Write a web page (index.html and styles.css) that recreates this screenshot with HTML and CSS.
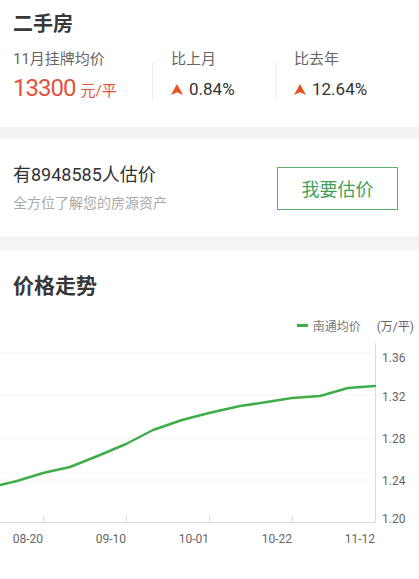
FILE: index.html
```html
<!DOCTYPE html>
<html lang="zh-CN">
<head>
  <meta charset="UTF-8" />
  <title>二手房 - 价格走势</title>
  <link rel="stylesheet" href="styles.css">
</head>
<body>
  <!-- 挂牌均价 -->
  <section class="summary">
    <h1 class="title">二手房</h1>
    <div class="stats">
      <div class="stat stat-main">
        <p class="stat-label">11月挂牌均价</p>
        <p class="stat-value price">13300<span class="unit">元/平</span></p>
      </div>
      <div class="divider"></div>
      <div class="stat stat-mid">
        <p class="stat-label">比上月</p>
        <p class="stat-value"><svg class="up" viewBox="0 0 12 11"><path d="M6 0 L12 11 L6 8.2 L0 11 Z"/></svg>0.84%</p>
      </div>
      <div class="divider"></div>
      <div class="stat">
        <p class="stat-label">比去年</p>
        <p class="stat-value"><svg class="up" viewBox="0 0 12 11"><path d="M6 0 L12 11 L6 8.2 L0 11 Z"/></svg>12.64%</p>
      </div>
    </div>
  </section>

  <div class="band"></div>

  <!-- 估价 -->
  <section class="estimate">
    <div class="estimate-text">
      <p class="estimate-count">有8948585人估价</p>
      <p class="estimate-sub">全方位了解您的房源资产</p>
    </div>
    <button class="estimate-btn">我要估价</button>
  </section>

  <div class="band band-2"></div>

  <!-- 价格走势 -->
  <section class="trend">
    <h1 class="title trend-title">价格走势</h1>
    <div class="legend">
      <span class="legend-line"></span>
      <span class="legend-name">南通均价</span>
      <span class="legend-unit">(万/平)</span>
    </div>
    <svg class="chart" width="419" height="246" viewBox="0 0 419 246">
      <g class="grid">
        <line x1="0" y1="20" x2="375" y2="20"/>
        <line x1="0" y1="62" x2="375" y2="62"/>
        <line x1="0" y1="105" x2="375" y2="105"/>
        <line x1="0" y1="147" x2="375" y2="147"/>
      </g>
      <g class="axis">
        <line x1="375.5" y1="10" x2="375.5" y2="189.5"/>
        <line x1="0" y1="189.5" x2="375.5" y2="189.5"/>
        <line x1="43.5" y1="183" x2="43.5" y2="189"/>
        <line x1="126.5" y1="183" x2="126.5" y2="189"/>
        <line x1="209.5" y1="183" x2="209.5" y2="189"/>
        <line x1="292.5" y1="183" x2="292.5" y2="189"/>
      </g>
      <g class="y-labels">
        <text x="382" y="29">1.36</text>
        <text x="382" y="68">1.32</text>
        <text x="382" y="110">1.28</text>
        <text x="382" y="152">1.24</text>
        <text x="382" y="190">1.20</text>
      </g>
      <g class="x-labels">
        <text x="43" y="210">08-20</text>
        <text x="126" y="210">09-10</text>
        <text x="209" y="210">10-01</text>
        <text x="292" y="210">10-22</text>
        <text x="375" y="210">11-12</text>
      </g>
      <polyline class="series" points="0,152 17,148 43,140 70,134 100,122 126,111 153,97 182,87 209,80 240,73 267,69 292,65 320,63 348,55 375,53"/>
    </svg>
  </section>
</body>
</html>
```

FILE: styles.css
```css
*{margin:0;padding:0;box-sizing:border-box}
body{
  font-family:Roboto,'Noto Sans CJK SC',sans-serif;
  background:#fff;
  color:#333;
  width:419px;
  overflow:hidden;
}

.title{font-size:20px;line-height:28px;font-weight:700;color:#383838}

/* ---------- 挂牌均价 ---------- */
.summary{height:127px;padding:10px 0 0 13px}
.stats{display:flex;margin-top:10px}
.stat{flex:0 0 auto}
.stat-main{width:139px}
.stat-mid{width:122px;padding-left:18px}
.stats .stat:last-child{padding-left:18px}
.divider{width:1px;height:38px;margin-top:14px;background:#efefef}
.stat-label{font-size:15px;line-height:22px;color:#666}
.stat-value{display:flex;align-items:center;margin-top:4px;height:30px;font-size:17px;color:#333}
.price{font-size:24px;letter-spacing:-1px;color:#e1533f;align-items:baseline}
.price .unit{font-size:15px;letter-spacing:0;margin-left:5px}
.up{width:12px;height:11px;margin:0 6px 0 0;fill:#e9521d}

.band{height:12px;background:linear-gradient(#f1f1f1,#f6f6f6)}
.band-2{height:14px}

/* ---------- 估价 ---------- */
.estimate{display:flex;align-items:center;justify-content:space-between;height:98px;padding:0 21px 0 13px}
.estimate-count{font-size:18px;line-height:24px;color:#333}
.estimate-sub{font-size:14px;line-height:20px;margin-top:6px;color:#aaa}
.estimate-btn{width:121px;height:43px;border:1px solid #5fae6f;background:#fff;color:#43a05a;font-size:18px;font-family:'Noto Sans CJK SC',sans-serif;cursor:pointer}

/* ---------- 价格走势 ---------- */
.trend{padding-top:20px}
.trend-title{font-size:21px;line-height:30px;padding-left:13px}
.legend{display:flex;align-items:center;justify-content:flex-end;height:16px;margin-top:16px;padding-right:5px;font-size:12px;color:#777}
.legend-line{width:11px;height:3px;background:#3fae49;margin-right:5px}
.legend-unit{margin-left:16px;font-size:12px;color:#666}
.chart{display:block}
.grid line{stroke:#e8e8e8;stroke-width:1;stroke-dasharray:2 2}
.axis line{stroke:#dcdcdc;stroke-width:1}
.y-labels text{font-size:12px;fill:#666;font-family:Roboto,sans-serif}
.x-labels text{font-size:12px;fill:#666;font-family:Roboto,sans-serif;text-anchor:end}
.series{fill:none;stroke:#3fae49;stroke-width:2.5;stroke-linejoin:round;stroke-linecap:round}
```
